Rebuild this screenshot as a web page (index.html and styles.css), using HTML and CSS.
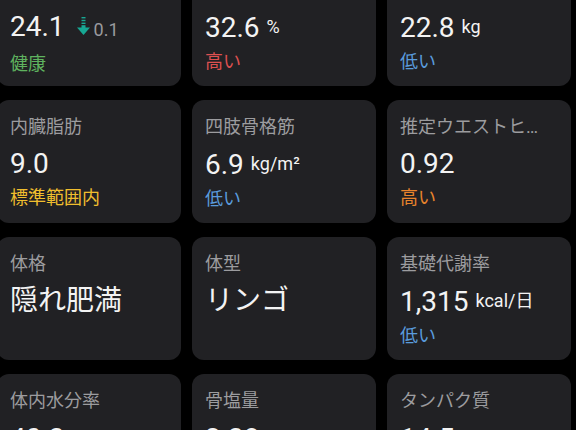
FILE: index.html
```html
<!DOCTYPE html>
<html lang="ja">
<head>
<meta charset="utf-8">
<link rel="stylesheet" href="styles.css">
</head>
<body>
<div class="grid">
  <div class="card">
    <div class="label">BMI</div>
    <div class="value">24.1<span class="delta"><svg class="arrow" width="13" height="18" viewBox="0 0 13 18"><rect x="4.5" y="0" width="4" height="1.4" fill="#17a894"/><rect x="4.5" y="2.8" width="4" height="1.4" fill="#17a894"/><rect x="4.5" y="5.6" width="4" height="1.4" fill="#17a894"/><rect x="4.5" y="8.2" width="4" height="3" fill="#17a894"/><polygon points="0,10.5 13,10.5 6.5,18" fill="#17a894"/></svg>0.1</span></div>
    <div class="status green">健康</div>
  </div>
  <div class="card">
    <div class="label">体脂肪率</div>
    <div class="value">32.6<span class="unit">%</span></div>
    <div class="status red">高い</div>
  </div>
  <div class="card">
    <div class="label">筋肉量</div>
    <div class="value">22.8<span class="unit">kg</span></div>
    <div class="status blue">低い</div>
  </div>

  <div class="card">
    <div class="label">内臓脂肪</div>
    <div class="value">9.0</div>
    <div class="status yellow">標準範囲内</div>
  </div>
  <div class="card">
    <div class="label">四肢骨格筋</div>
    <div class="value">6.9<span class="unit">kg/m²</span></div>
    <div class="status blue">低い</div>
  </div>
  <div class="card">
    <div class="label">推定ウエストヒップ比</div>
    <div class="value">0.92</div>
    <div class="status orange">高い</div>
  </div>

  <div class="card">
    <div class="label">体格</div>
    <div class="value">隠れ肥満</div>
  </div>
  <div class="card">
    <div class="label">体型</div>
    <div class="value">リンゴ</div>
  </div>
  <div class="card">
    <div class="label">基礎代謝率</div>
    <div class="value">1,315<span class="unit">kcal/日</span></div>
    <div class="status blue">低い</div>
  </div>

  <div class="card">
    <div class="label">体内水分率</div>
    <div class="value">40.3<span class="unit">%</span></div>
  </div>
  <div class="card">
    <div class="label">骨塩量</div>
    <div class="value">2.38<span class="unit">kg</span></div>
  </div>
  <div class="card">
    <div class="label">タンパク質</div>
    <div class="value">14.5<span class="unit">%</span></div>
  </div>
</div>
</body>
</html>
```
FILE: styles.css
```css
html, body {
  margin: 0;
  padding: 0;
  background: #000;
  overflow: hidden;
  height: 430px;
}
body {
  font-family: Roboto, "Noto Sans CJK JP", sans-serif;
  color: #f1f1f1;
}
.grid {
  display: grid;
  grid-template-columns: repeat(3, 184px);
  column-gap: 11px;
  row-gap: 14px;
  margin: -37px 0 0 -3px;
}
.card {
  box-sizing: border-box;
  height: 123px;
  background: #212124;
  border-radius: 12px;
  padding: 15px 13px 0 13px;
  overflow: hidden;
}
.label {
  font-size: 18px;
  line-height: 24px;
  color: #9c9c9f;
  white-space: nowrap;
  overflow: hidden;
  text-overflow: ellipsis;
  margin-right: 6px;
}
.value {
  margin-top: 7px;
  font-size: 28px;
  line-height: 36px;
  color: #f3f3f3;
  white-space: nowrap;
}
.unit {
  font-size: 18px;
  margin-left: 7px;
  vertical-align: 4px;
}
.delta {
  font-size: 18px;
  color: #9a9a9e;
  margin-left: 12px;
}
.arrow {
  vertical-align: 1px;
  margin-right: 4px;
}
.status {
  margin-top: 4px;
  font-size: 18px;
  line-height: 24px;
}
.green { color: #5fb35f; }
.red { color: #dd5050; }
.blue { color: #5a9bdc; }
.yellow { color: #f0be2e; }
.orange { color: #e8842c; }
```
